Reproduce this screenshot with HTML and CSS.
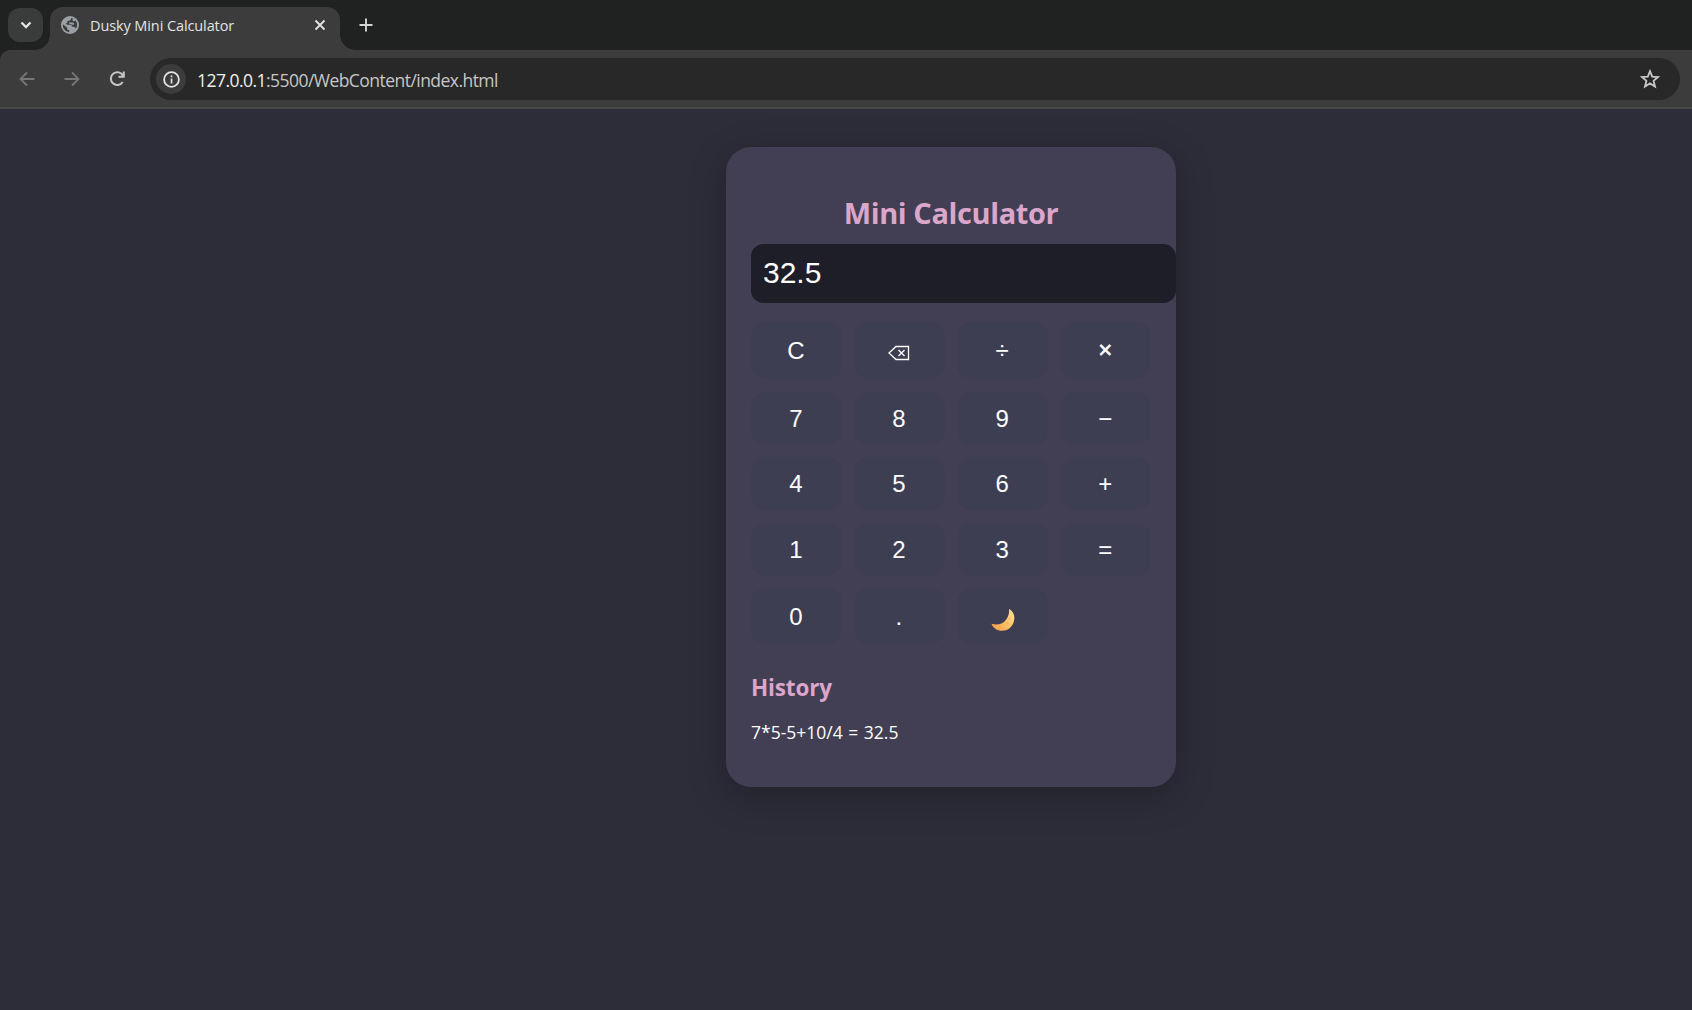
FILE: index.html
```html
<!DOCTYPE html>
<html lang="en">
<head>
<meta charset="utf-8">
<title>Dusky Mini Calculator</title>
<link rel="stylesheet" href="styles.css">
</head>
<body>
<header class="tabstrip">
  <button class="tab-search" aria-label="Search tabs"><svg width="12" height="8" viewBox="0 0 12 8"><path d="M1.500 1.500 6 6l4.500-4.500" fill="none" stroke="#e3e3e3" stroke-width="2.300"/></svg></button>
  <div class="tab">
    <svg class="globe" width="18" height="18" viewBox="0 0 18 18"><circle cx="9" cy="9" r="9" fill="#9aa0a6"/><path d="M10 1.900c.3 1.700-.5 2.700-2.200 2.800L6.500 5v1.600L4.600 7.700l1.600 1.100h3.300c.8 0 1.300.5 1.300 1.200v.8h1.700c1.200 0 1.900.6 2.100 1.600l1-.9C16.500 8.600 16 6.300 14.500 4.400c-.5.800-1.900 1.100-2.600.5-.8-.6-.3-1.600.3-2.200zM1.900 8.300l4.300 3.500v1c0 .8.500 1.300 1.300 1.300h.7v2C4.500 15.700 1.400 12.600 1.900 8.300z" fill="#3c3c3c"/><path d="M8.200 6.500h3.300c1 0 1.500.6 1.500 1.300v1h-1.500c-.8 0-1-.9-1.800-.9H8.200z" fill="#9aa0a6"/></svg>
    <span class="tab-title">Dusky Mini Calculator</span>
    <svg class="tab-close" width="12" height="12" viewBox="0 0 12 12"><path d="m1.500 1.500 9 9m0-9-9 9" stroke="#e3e3e3" stroke-width="1.900"/></svg>
  </div>
  <svg class="new-tab" width="14" height="14" viewBox="0 0 14 14"><path d="M7 .5v13M.5 7h13" stroke="#d5d5d5" stroke-width="1.900"/></svg>
</header>
<nav class="toolbar">
  <svg class="arrow" width="16" height="16" viewBox="0 0 16 16"><path d="M15.500 8H2M8 1.500 1.500 8 8 14.500" fill="none" stroke="#777" stroke-width="1.800"/></svg>
  <svg class="arrow" width="16" height="16" viewBox="0 0 16 16"><path d="M.5 8H14M8 1.500 14.500 8 8 14.500" fill="none" stroke="#777" stroke-width="1.800"/></svg>
  <svg class="arrow" width="16" height="16" viewBox="0 0 16 16"><path d="M13.700 11A6.400 6.400 0 1 1 14 4.700M14.800.6v5.200H9.500" fill="none" stroke="#c7c7c7" stroke-width="2"/></svg>
  <div class="address">
    <span class="info"><svg width="17" height="17" viewBox="0 0 17 17"><circle cx="8.500" cy="8.500" r="7.400" fill="none" stroke="#e3e3e3" stroke-width="1.800"/><path d="M8.500 7.400v5M8.500 4.500v1.800" stroke="#e3e3e3" stroke-width="1.700"/></svg></span>
    <span class="url"><b>127.0.0.1</b>:5500/WebContent/index.html</span>
    <svg class="star" width="20" height="20" viewBox="0 0 20 20"><path d="m10 2.200 2.200 5.400 5.900.4-4.500 3.800 1.400 5.700-5-3.100-5 3.100 1.400-5.700L1.900 8l5.900-.4z" fill="none" stroke="#c7c7c7" stroke-width="1.800"/></svg>
  </div>
</nav>
<main class="page">
  <section class="calculator">
    <h1>Mini Calculator</h1>
    <div class="display">32.5</div>
    <div class="keys">
      <button>C</button>
      <button><svg class="backspace" width="22" height="16" viewBox="0 0 22 16"><path d="M1 8 8 1.500h12.500v13H8zM10.500 5l6 6m0-6-6 6" fill="none" stroke="#fff" stroke-width="1.300"/></svg></button>
      <button>÷</button><button class="times">×</button>
      <button>7</button><button>8</button><button>9</button><button>−</button>
      <button>4</button><button>5</button><button>6</button><button>+</button>
      <button>1</button><button>2</button><button>3</button><button>=</button>
      <button>0</button><button>.</button>
      <button aria-label="Toggle theme"><svg class="moon" width="24" height="22" viewBox="0 0 24 22"><defs><linearGradient id="glow" x1="0" y1="1" x2="1" y2="0"><stop offset="0" stop-color="#f59a4a"/><stop offset=".5" stop-color="#ffc267"/><stop offset="1" stop-color="#ffe39b"/></linearGradient></defs><path d="M18 0c3.600 2 5.800 5.500 5.300 10C22.800 17 17 22 11 21.800 6 21.600 2 19 .5 14.700c6 1.900 11.500.3 14.800-4.200C17.500 7.300 18.500 4 18 0z" fill="url(#glow)"/><path d="M19 8.500c-1 .6-.9 1.700.2 1.800M15.500 14c1.300-.6 2.200.3 1.300 1.500M8 17c1 .2 1.800-.1 2.300-.7" fill="none" stroke="#e59a4c" stroke-width=".8"/></svg></button>
    </div>
    <h2>History</h2>
    <p class="entry">7*5-5+10/4 = 32.5</p>
  </section>
</main>
</body>
</html>
```
FILE: styles.css
```css
* { box-sizing: border-box; }
body {
  margin: 0;
  height: 1010px;
  display: flex;
  flex-direction: column;
  overflow: hidden;
  background: #202221;
  color: #fff;
  font-family: "Open Sans", "Noto Sans", sans-serif;
}
svg { display: block; flex: none; }
button { border: 0; padding: 0; }

.tabstrip { height: 50px; display: flex; align-items: flex-start; padding: 7px 0 0 8px; flex: none; }
.tab-search {
  width: 35px; height: 34px; margin-top: 1px;
  display: grid; place-items: center;
  border-radius: 12px; background: #3a3b3b;
}
.tab {
  position: relative;
  width: 290px; height: 43px; margin-left: 7px;
  padding: 0 14px 7px 11px;
  display: flex; align-items: center;
  background: #3c3c3c; border-radius: 13px 13px 0 0;
}
.tab::before, .tab::after { content: ""; position: absolute; bottom: 0; width: 15px; height: 15px; }
.tab::before { left: -15px; background: radial-gradient(circle at 0 0, transparent 14.500px, #3c3c3c 15px); }
.tab::after { right: -15px; background: radial-gradient(circle at 100% 0, transparent 14.500px, #3c3c3c 15px); }
.tab-title { padding-top: 2px; margin-left: 11px; flex: 1; font-size: 14.500px; line-height: 20px; color: #e3e3e3; letter-spacing: -0.100px; white-space: nowrap; }
.new-tab { margin: 11px 0 0 19px; }

.toolbar {
  height: 59px; flex: none;
  display: flex; align-items: center;
  padding: 1px 12px 0 19px;
  background: #3c3c3c; border-bottom: 2px solid #494a4a;
  border-top-left-radius: 10px;
}
.arrow { margin-right: 29px; }
.address {
  flex: 1; height: 42px; margin-left: -4px;
  display: flex; align-items: center;
  padding: 0 20px 0 6px;
  border-radius: 21px; background: #282828;
}
.info { width: 30px; height: 30px; border-radius: 50%; background: #3c3c3c; display: grid; place-items: center; }
.url { flex: 1; padding-top: 1px; margin-left: 11px; font-size: 17.500px; color: #c7c7c7; letter-spacing: -0.540px; }
.url b { font-weight: 400; color: #f0f0f0; }

.page { flex: 1; padding: 38px 0 0 726px; background: #2d2d3a; }
.calculator {
  width: 450px; height: 640px;
  padding: 45px 25px 0;
  border-radius: 25px; background: #423e53;
  box-shadow: 0 10px 37px rgba(0, 0, 0, .25);
}
h1 { margin: 0; height: 52px; line-height: 41px; font-size: 29px; letter-spacing: -0.400px; text-align: center; color: #dba6cb; white-space: nowrap; }
.display {
  width: 425px; height: 59px; padding-left: 12px;
  line-height: 57px; font-family: "Liberation Sans", Arial, sans-serif; font-size: 30px;
  border-radius: 12.500px; background: #1e1e28;
}
.keys {
  margin-top: 19px;
  display: grid; grid-template-columns: repeat(4, 1fr);
  grid-template-rows: 57px 53px 53px 53px 56px;
  gap: 12.500px;
}
.keys button {
  display: grid; place-items: center;
  padding-right: 1px;
  color: #fff; font: 24px/27px "Liberation Sans", Arial, sans-serif;
  border-radius: 15px; background: #3e3e52;
}
.keys .times { padding-bottom: 2px; -webkit-text-stroke: .6px #fff; }
.backspace { margin-top: 4px; }
.moon { margin: 7px 0 0 1px; }
h2 { margin: 27px 0 0; font-size: 22.500px; line-height: 34px; letter-spacing: -0.150px; color: #dba6cb; }
.entry { margin: 15px 0 0; font-size: 17.500px; line-height: 24px; word-spacing: 1px; }
```
